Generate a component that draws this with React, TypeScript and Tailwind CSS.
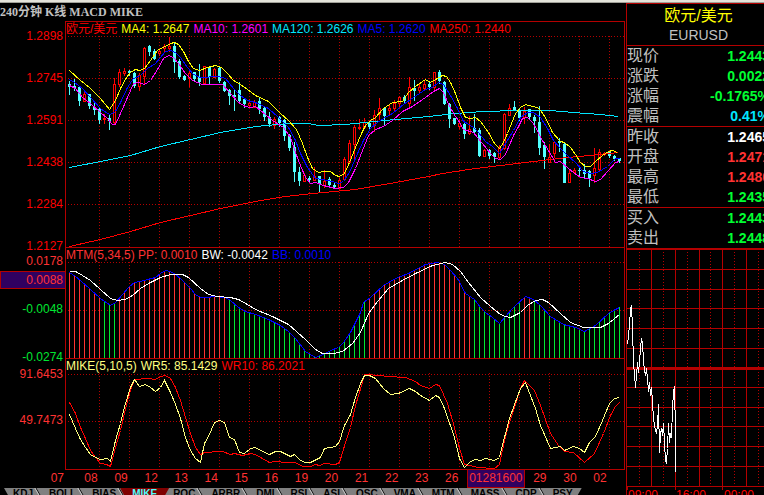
import React from 'react';
import clsx from 'clsx';

type Point = [number, number];

const parse = (s: string): Point[] => s.trim().split(/\s+/).map((p) => p.split(',').map(Number) as Point);

const valueAt = (pts: Point[], x: number) => {
  const i = Math.max(1, pts.findIndex((p) => p[0] >= x));
  const [x0, y0] = pts[i - 1];
  const [x1, y1] = pts[i];
  return Math.round(y0 + ((y1 - y0) * (x - x0)) / (x1 - x0));
};

const MA4 = '69,70 80,80 89,87 100,98 109,109 115,100 120,88 126,77 130,72 135,69 139,70 144,68 150,60 157,50 160,48 165,46 170,43 174,42 178,44 183,51 188,61 193,68 199,70 207,67 215,65 221,67 227,73 233,80 240,84 247,89 255,95 268,101 280,113 288,120 296,129 302,143 307,157 312,168 318,172 323,171 330,171 335,175 339,176 344,173 349,162 355,147 361,133 365,125 370,120 375,117 383,108 392,102 402,101 408,92 415,86 425,79 430,82 437,78 442,75 446,76 450,82 455,93 460,107 465,117 470,118 475,117 480,121 488,132 494,143 499,148 503,142 507,133 511,123 515,113 520,107 525,104 532,106 537,107 540,110 545,117 552,132 560,141 564,142 570,147 575,154 580,162 585,166 590,166 595,161 602,155 608,151 612,150 617,152';
const MA5 = '69,79 74,82 82,88 90,97 100,108 107,113 110,114 115,111 120,102 127,87 133,78 140,75 147,68 155,63 160,57 165,51 170,50 175,52 180,57 187,67 193,74 200,77 218,76 225,78 233,88 240,95 247,100 255,102 268,108 278,117 288,127 295,140 300,153 307,167 315,178 322,179 332,181 338,183 343,181 350,170 357,153 363,140 370,128 377,122 383,118 392,113 403,104 413,97 425,89 432,87 438,82 443,84 450,95 457,108 463,121 467,123 473,127 478,132 485,141 492,146 499,153 507,140 513,130 520,117 527,112 533,112 540,117 547,128 553,140 560,148 567,155 575,162 583,171 590,173 597,172 607,166 615,158 619,158';
const MA10 = '69,85 75,88 82,97 90,103 100,112 107,118 112,124 115,124 120,113 127,97 133,83 138,82 144,84 150,80 157,69 163,58 168,55 173,57 178,63 185,73 192,80 202,84 222,84 230,93 238,102 245,106 250,107 255,106 265,114 272,120 283,127 290,137 295,152 300,165 305,177 310,183 315,182 323,185 335,188 343,187 348,182 355,168 362,150 368,135 375,129 383,126 392,120 402,111 412,106 425,97 433,91 439,88 443,92 448,104 455,116 458,120 463,129 473,132 482,143 490,153 495,158 500,159 505,154 513,135 517,128 522,118 527,117 532,122 537,130 540,137 548,150 555,162 560,161 568,168 573,172 580,177 587,178 595,181 600,179 608,170 615,162 619,161';
const MA120 = '69,167 100,161 130,155 160,146 190,139 220,132 255,126 288,123 308,123 318,125 345,124 365,122 395,119 428,116 455,113 482,111 517,110 550,110 573,112 600,114 618,116';
const MA250 = '69,246 100,239 130,231 160,222 190,215 220,208 255,201 285,196 312,193 355,189 395,182 428,176 442,173 468,169 500,165 533,161 567,157 600,154 618,152';

const BB = '69,272 75,276 80,280 90,289 100,298 110,305 115,302 123,293 128,287 134,282 140,281 147,279 155,277 160,273 165,270 170,271 175,274 180,278 190,288 195,294 200,297 207,297 213,296 225,297 230,300 238,307 245,311 255,314 268,319 280,325 288,331 295,338 305,351 310,354 315,357 325,353 330,350 338,347 343,342 350,332 355,322 360,312 363,302 370,297 383,285 395,278 408,273 425,264 437,262 444,264 450,270 457,278 465,293 474,299 480,307 485,312 492,317 499,323 505,316 513,307 525,296 533,299 540,305 550,316 563,324 575,327 584,331 595,325 608,313 615,309 619,307';
const BW = '69,271 75,271 82,275 90,280 100,289 110,298 117,300 125,299 132,295 140,288 148,283 160,277 170,274 182,274 188,277 200,288 208,294 217,296 230,297 238,299 247,304 255,309 272,316 288,324 305,339 315,349 322,353 333,353 342,351 352,343 360,332 368,313 377,301 388,288 400,281 415,273 432,265 445,262 452,264 460,271 468,282 480,297 490,306 500,314 505,316 510,317 520,312 527,305 535,300 542,299 548,302 560,313 570,322 583,327 600,327 608,323 619,314';

const WR5 = '69,414 75,428 80,439 85,447 90,454 95,457 100,459 107,458 110,461 115,440 120,423 125,403 130,387 134,379 139,386 145,384 150,387 155,391 160,387 164,380 170,392 175,404 180,418 185,437 190,450 195,458 200,462 204,443 208,436 214,422 219,420 224,422 229,437 234,439 239,452 244,453 250,448 255,447 260,450 269,454 275,451 280,451 290,456 294,454 300,460 305,462 310,462 320,457 324,448 335,446 339,441 344,425 350,414 355,397 360,383 364,375 369,375 375,378 383,388 390,394 398,393 409,388 415,391 420,395 429,400 435,395 439,397 444,408 454,437 459,458 464,467 470,461 475,459 480,460 485,458 494,460 499,457 504,437 509,418 514,404 520,388 525,382 530,395 535,408 540,425 550,448 560,446 564,450 573,446 579,448 584,452 589,442 595,436 602,420 609,403 614,398 619,397';
const WR10 = '69,402 75,413 80,427 85,438 90,450 95,457 100,463 106,464 110,466 115,447 120,430 125,408 130,390 134,379 147,378 155,379 160,376 165,375 170,378 175,387 180,400 185,417 190,433 195,447 200,454 204,452 209,452 214,451 222,451 230,454 234,453 242,455 250,453 255,454 260,457 269,462 275,461 285,462 294,462 303,466 310,466 315,464 319,465 324,463 335,464 339,462 345,442 350,427 355,405 361,385 364,374 380,375 387,376 405,377 415,381 420,385 429,388 435,384 439,385 447,403 454,427 459,448 464,464 470,465 477,467 494,468 499,464 504,440 509,422 514,407 520,388 524,380 534,390 540,405 550,433 558,445 564,451 573,452 584,462 594,453 603,433 610,415 615,406 619,402';

const TICKS = '627,344 628,335 629,325 630,308 631,305 632,328 633,362 635,387 636,375 637,362 638,372 639,362 640,348 641,338 642,343 643,360 644,370 645,375 646,368 647,378 648,391 649,382 650,395 651,387 652,402 653,418 655,430 656,433 657,425 658,404 659,452 660,433 661,428 662,435 663,423 664,442 665,460 666,462 667,448 668,423 669,442 670,433 671,437 672,408 673,392 674,386 675,432 675,471';

// r = rising, f = falling, then high / body top / body bottom / low
const CANDLES = `f81,84,87,95 f79,86,88,91 f87,87,101,106 r90,94,101,101 f94,94,106,109 f103,107,110,115 f107,109,120,124 r114,118,119,124
f115,118,121,130 r78,84,122,124 r69,72,84,87 r68,71,73,76 f70,71,73,76 f72,73,86,88 r73,75,86,91 r47,48,76,84 f45,46,52,56
f49,51,59,60 r50,51,53,56 r44,46,48,53 r37,46,48,52 f43,46,62,73 f59,61,77,79 f75,76,80,81 r71,73,78,87 f72,72,79,81
f64,77,82,86 r66,66,83,83 f67,67,77,84 r68,69,77,78 f67,68,81,83 f81,82,91,92 f89,90,96,105 f90,95,97,111 f82,90,101,102
f98,99,104,108 r99,103,105,107 r100,102,107,108 f98,101,109,114 f107,108,117,121 f112,117,124,127 r117,119,125,129
f116,117,123,127 f119,120,136,141 f134,135,148,151 f142,147,172,182 f167,172,181,186 r173,175,181,182 f176,178,180,183
r167,176,180,181 f176,176,184,192 r170,181,185,188 f177,179,185,188 f183,185,187,189 r178,180,188,188 r157,159,179,181
r140,143,162,163 r125,127,144,162 r119,127,128,130 r118,122,127,129 f122,123,127,129 r110,115,125,132 r98,108,114,120
f107,108,116,125 r104,108,110,116 r100,103,108,111 r96,97,103,107 f95,97,101,104 r77,87,103,109 f80,88,91,101 r84,87,90,94
r80,84,88,90 f82,84,87,90 r72,72,87,91 f70,72,81,84 f81,82,104,105 f103,104,119,128 f118,118,124,125 r119,123,126,129
f122,124,134,139 r116,129,133,135 f114,128,132,133 f128,130,156,157 r149,150,156,157 f149,150,156,159 f152,153,157,163
r145,147,157,160 r113,114,148,150 r104,108,115,116 f101,107,110,111 f108,111,118,121 r107,111,117,124 f109,109,117,119
f115,117,121,133 f106,122,148,155 f142,145,157,169 r144,157,162,163 r141,142,153,158 f138,141,143,152 f143,144,183,183
r169,173,182,183 r168,170,172,174 f168,170,171,176 f164,170,174,179 f170,171,178,187 r148,168,175,183 r149,152,169,171
r152,153,154,156 f151,152,156,158 f155,156,159,161 f158,158,161,163`
  .split(/\s+/)
  .map((c, i) => {
    const [high, top, bottom, low] = c.slice(1).split(',').map(Number);
    return { x: 69 + i * 5, up: c[0] === 'r', high, top, bottom, low };
  });

const isPositive = (i: number) => i < 7 || (i > 9 && i < 32) || (i > 59 && i < 81) || i === 91 || i === 92;

const BB_POINTS = parse(BB);
const GRID_X = Array.from({ length: 18 }, (_, i) => 99 + i * 30);

function Line({ points, color }: { points: string; color: string }) {
  return <polyline points={points} transform="translate(0.5 0.5)" fill="none" stroke={color} vectorEffect="non-scaling-stroke" />;
}

function Plot({ top, height, rows, children, className }: { top: number; height: number; rows: number[]; children: React.ReactNode; className: string }) {
  return (
    <svg viewBox={`66 ${top} 558 ${height}`} preserveAspectRatio="none" shapeRendering="crispEdges" className={clsx('block w-full', className)}>
      <g stroke="#b40000" strokeDasharray="1 2">
        {rows.map((y) => <path key={y} d={`M68 ${y + 0.5}H624`} />)}
        {GRID_X.map((x) => <path key={x} d={`M${x + 0.5} ${top}V${top + height}`} />)}
      </g>
      {children}
    </svg>
  );
}

function Panel({ legend, children }: { legend: [string, string][]; children: React.ReactNode }) {
  return (
    <section className="border-t border-[#b40000]">
      <div className="flex h-[14px] gap-1 overflow-hidden whitespace-nowrap leading-[14px]">
        {legend.map(([text, color]) => <span key={text} className={color}>{text}</span>)}
      </div>
      {children}
    </section>
  );
}

function PriceAxis() {
  return (
    <div className="flex w-[65px] shrink-0 flex-col text-right leading-[14px] text-[#ff3232]">
      <div className="flex flex-col gap-7 pt-2 pr-0.5 text-[#ff0000]">
        {['1.2898', '1.2745', '1.2591', '1.2438', '1.2284', '1.2127'].map((p) => <span key={p}>{p}</span>)}
      </div>
      <span className="mt-px pr-0.5">0.0178</span>
      <span className="mt-[3px] h-[18px] border border-r-0 border-[#b40000] bg-[#300060] pr-0.5 leading-4">0.0088</span>
      <span className="mt-[13px] pr-0.5 text-[#00e632]">-0.0048</span>
      <span className="mt-[34px] pr-0.5 text-[#00e632]">-0.0274</span>
      <span className="mt-[3px] pr-0.5">91.6453</span>
      <span className="mt-8 pr-0.5">49.7473</span>
    </div>
  );
}

function TimeAxis() {
  return (
    <div className="flex h-[18px] text-center leading-4 text-[#ff3232]">
      <span className="w-[66px] shrink-0 pr-0.5 text-right">07</span>
      <span className="flex-[10]" />
      {['08', '09', '12', '13', '14', '15', '16', '19', '20', '21', '22', '23', '26'].map((d) => <span key={d} className="flex-[30]">{d}</span>)}
      <span className="w-[58px] shrink-0 border border-t-0 border-[#b40000] bg-[#300060]">01281600</span>
      {['29', '30', '02'].map((d) => <span key={d} className="flex-[30]">{d}</span>)}
      <span className="flex-[10]" />
    </div>
  );
}

function Charts() {
  return (
    <div className="min-w-0 flex-1 border-x border-b border-[#b40000]">
      <Panel
        legend={[
          ['欧元/美元', 'text-[#ff0000]'],
          ['MA4: 1.2647', 'text-[#ffff00]'],
          ['MA10: 1.2601', 'text-[#ff00ff]'],
          ['MA120: 1.2626', 'text-[#00e6ff]'],
          ['MA5: 1.2620', 'text-[#0000ff]'],
          ['MA250: 1.2440', 'text-[#ff0000]'],
        ]}
      >
        <Plot top={36} height={211} rows={[36, 78, 120, 162, 204]} className="h-[211px]">
          {CANDLES.map((c) =>
            c.up ? (
              <g key={c.x} stroke="#ff0000">
                <path d={`M${c.x + 0.5} ${c.high}V${c.low}`} />
                <rect x={c.x - 0.5} y={c.top + 0.5} width={2} height={Math.max(1, c.bottom - c.top)} fill="#000" />
              </g>
            ) : (
              <g key={c.x} fill="#50ffff">
                <rect x={c.x} y={c.high} width={1} height={c.low - c.high} />
                <rect x={c.x - 1} y={c.top} width={3} height={c.bottom - c.top} />
              </g>
            ),
          )}
          <Line points={MA250} color="#ff0000" />
          <Line points={MA120} color="#00e6ff" />
          <Line points={MA5} color="#0000ff" />
          <Line points={MA10} color="#ff00ff" />
          <Line points={MA4} color="#ffff00" />
        </Plot>
      </Panel>

      <Panel
        legend={[
          ['MTM(5,34,5) PP: 0.0010', 'text-[#ff3232]'],
          ['BW: -0.0042', 'text-white'],
          ['BB: 0.0010', 'text-[#0000ff]'],
        ]}
      >
        <Plot top={262} height={96} rows={[262, 310]} className="h-24">
          {CANDLES.map(({ x }, i) => (
            <path key={x} d={`M${x + 0.5} ${valueAt(BB_POINTS, x)}V358`} stroke={isPositive(i) ? '#ff3232' : '#00e632'} />
          ))}
          <Line points={BB} color="#0000ff" />
          <Line points={BW} color="#ffffff" />
        </Plot>
      </Panel>

      <Panel
        legend={[
          ['MIKE(5,10,5)', 'text-[#ffff80]'],
          ['WR5: 85.1429', 'text-[#ffff80]'],
          ['WR10: 86.2021', 'text-[#ff0000]'],
        ]}
      >
        <Plot top={373} height={96} rows={[374, 421]} className="h-24">
          <Line points={WR10} color="#ff0000" />
          <Line points={WR5} color="#ffff80" />
        </Plot>
      </Panel>
    </div>
  );
}

const TABS = ['KDJ', 'BOLL', 'BIAS', 'MIKE', 'ROC', 'ARBR', 'DMI', 'RSI', 'ASI', 'OSC', 'VMA', 'MTM', 'MASS', 'CDP', 'PSY'];

function IndicatorTabs() {
  return (
    <nav className="ml-1 flex h-4 w-fit bg-[#808080] px-px text-[10px] font-bold leading-3 [clip-path:polygon(0_0,100%_0,calc(100%-9px)_100%,9px_100%)]">
      {TABS.map((t) => (
        <button
          key={t}
          className={clsx(
            'relative flex h-4 items-start',
            t === 'MIKE'
              ? 'z-10 -mx-1 bg-[#800000] px-3 text-[#50ffff] [clip-path:polygon(0_0,100%_0,calc(100%-9px)_100%,9px_100%)]'
              : 'px-2 text-black after:absolute after:inset-y-0 after:right-0 after:skew-x-[30deg] after:border-x after:border-l-[#d0d0d0] after:border-r-black last:after:hidden',
          )}
        >
          {t}
        </button>
      ))}
    </nav>
  );
}

const QUOTES: [string, string, string][][] = [
  [
    ['现价', '1.2443', 'text-[#00ff32]'],
    ['涨跌', '0.0022', 'text-[#00ff32]'],
    ['涨幅', '-0.1765%', 'text-[#00ff32]'],
    ['震幅', '0.41%', 'text-[#00e6ff]'],
  ],
  [
    ['昨收', '1.2465', 'text-white'],
    ['开盘', '1.2471', 'text-[#ff3232]'],
    ['最高', '1.2480', 'text-[#ff3232]'],
    ['最低', '1.2435', 'text-[#00ff32]'],
  ],
  [
    ['买入', '1.2443', 'text-[#00ff32]'],
    ['卖出', '1.2448', 'text-[#00ff32]'],
  ],
];

function QuotePanel() {
  return (
    <aside className="w-[138px] shrink-0 overflow-hidden border-l border-t border-[#b40000]">
      <div className="w-[143px]">
        <div className="h-[41px] pt-[2px] text-center">
          <h2 className="text-base leading-5 text-[#ffff00]">欧元/美元</h2>
          <p className="text-sm leading-[18px] text-[#c0c0c0]">EURUSD</p>
        </div>
        {QUOTES.map((group) => (
          <dl key={group[0][0]} className="border-t border-[#b40000]">
            {group.map(([label, value, color]) => (
              <div key={label} className="flex h-5 items-center justify-between">
                <dt className="text-base leading-5 text-[#c0c0c0]">{label}</dt>
                <dd className={clsx('text-sm font-bold leading-5', color)}>{value}</dd>
              </div>
            ))}
          </dl>
        ))}
        <svg viewBox="627 248 144 242" shapeRendering="crispEdges" className="block h-[242px] w-[144px]">
          <g stroke="#b40000">
            {[269, 289, 308, 328, 348, 387, 407, 426, 446, 466, 486].map((y) => <path key={y} d={`M627 ${y + 0.5}H771`} />)}
            {[651, 675, 699, 722, 746].map((x) => <path key={x} d={`M${x + 0.5} 249V486`} />)}
            {[639, 663, 687, 710, 734, 758].map((x) => <path key={x} d={`M${x + 0.5} 252V486`} strokeDasharray="1 2" />)}
            <path d="M627 249H771" strokeWidth="2" />
            <path d="M627 368.5H771" strokeWidth="3" />
            <path d="M627.5 486V490M675.5 486V490M722.5 486V490" />
          </g>
          <Line points={TICKS} color="#ffffff" />
        </svg>
        <div className="-mt-[2px] flex text-xs leading-[14px] text-[#ff0000]">
          {['09:00', '16:00', '00:00'].map((t) => <span key={t} className="w-12 shrink-0 pl-px">{t}</span>)}
        </div>
      </div>
    </aside>
  );
}

export default function App() {
  return (
    <div className="flex h-screen flex-col overflow-hidden bg-black font-['Liberation_Sans','Noto_Sans_CJK_SC',sans-serif] text-xs">
      <div className="h-[3px] shrink-0 border-b border-[#a0a098] bg-[#e4e3da]" />
      <div className="flex min-h-0 flex-1 gap-px">
        <main className="min-w-0 flex-1">
          <h1 className="h-[18px] whitespace-nowrap font-['Liberation_Serif','Noto_Sans_CJK_SC',serif] text-xs font-bold leading-[18px] text-[#c0c0c0]">
            240分钟 K线 MACD MIKE
          </h1>
          <div className="flex">
            <PriceAxis />
            <Charts />
          </div>
          <TimeAxis />
          <IndicatorTabs />
        </main>
        <QuotePanel />
      </div>
    </div>
  );
}
